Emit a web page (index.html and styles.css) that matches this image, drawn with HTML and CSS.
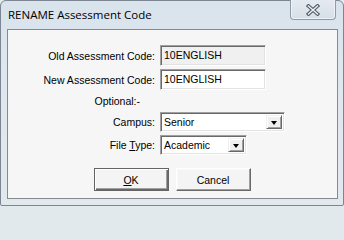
FILE: index.html
```html
<!DOCTYPE html>
<html>
<head>
<meta charset="utf-8">
<title>RENAME Assessment Code</title>
<link rel="stylesheet" href="styles.css">
</head>
<body>
<div class="window">
  <div class="titlebar">
    <span class="title">RENAME Assessment Code</span>
    <div class="close">
      <svg width="14" height="12" viewBox="0 0 14 12">
        <path d="M2.5 2 L11.5 10 M11.5 2 L2.5 10" stroke="#4f5862" stroke-width="3.6" stroke-linecap="square" fill="none"/>
        <path d="M2.5 2 L11.5 10 M11.5 2 L2.5 10" stroke="#eef1f4" stroke-width="1.5" stroke-linecap="square" fill="none"/>
      </svg>
    </div>
  </div>
  <div class="client">
    <div class="form">
      <div class="lbl">Old Assessment Code:</div>
      <div class="tb ro">10ENGLISH</div>
      <div class="lbl">New Assessment Code:</div>
      <div class="tb">10ENGLISH</div>
      <div class="lbl opt">Optional:-</div>
      <div></div>
      <div class="lbl">Campus:</div>
      <div class="combo wide"><span class="val">Senior</span><span class="arrow"><span class="tri"></span></span></div>
      <div class="lbl">File <u>T</u>ype:</div>
      <div class="combo narrow"><span class="val">Academic</span><span class="arrow"><span class="tri"></span></span></div>
    </div>
    <div class="buttons">
      <div class="btn default"><span><u>O</u>K</span></div>
      <div class="btn">Cancel</div>
    </div>
  </div>
</div>
</body>
</html>
```

FILE: styles.css
```css
html, body {
  margin: 0;
  padding: 0;
}
html {
  background: #e2e9ed;
}
body {
  width: 344px;
  height: 206px;
  background: #e2e9ed;
  overflow: hidden;
}
.window {
  box-sizing: border-box;
  width: 344px;
  height: 206px;
  border: 1px solid #7b8692;
  border-radius: 6px 6px 2px 2px;
  background: linear-gradient(to bottom, #d9e3ec 0%, #dfe7ee 40%, #e2e9ed 100%);
  display: flex;
  flex-direction: column;
}
.titlebar {
  height: 28px;
  display: flex;
  align-items: flex-start;
  flex: none;
}
.title {
  font-family: "Open Sans", "Noto Sans", sans-serif;
  font-size: 11.5px;
  color: #000;
  line-height: 17px;
  margin-top: 5px;
  padding-left: 7px;
}
.close {
  margin-left: auto;
  margin-right: 7px;
  margin-top: -1px;
  width: 46px;
  height: 20px;
  box-sizing: border-box;
  border: 1px solid #8f9aa6;
  border-top: none;
  border-radius: 0 0 4px 4px;
  background: linear-gradient(to bottom, #e4eaf0, #d6dfe8);
  box-shadow: inset 0 -1px 0 #eef2f6, inset 1px 0 0 #eef2f6, inset -1px 0 0 #eef2f6;
  display: flex;
  align-items: center;
  justify-content: center;
}
.close svg {
  display: block;
  margin-top: 1px;
}
.client {
  box-sizing: border-box;
  height: 170px;
  margin: 0 5px 6px 6px;
  border: 1px solid #858b91;
  background: #f6f6f6;
  display: flex;
  flex-direction: column;
  font-family: "Liberation Sans", Arial, sans-serif;
  font-size: 10.5px;
  color: #000;
}
.form {
  display: grid;
  grid-template-columns: 147px auto;
  grid-template-rows: 21px 21px 16px 20px 20px;
  column-gap: 5px;
  row-gap: 3px;
  padding-top: 15px;
  justify-items: start;
}
.lbl {
  justify-self: stretch;
  text-align: right;
  align-self: center;
  white-space: nowrap;
}
.lbl.opt {
  padding-right: 15px;
}
.tb {
  box-sizing: border-box;
  width: 106px;
  height: 21px;
  border: 1px solid;
  border-color: #a0a0a0 #ffffff #ffffff #a0a0a0;
  box-shadow: inset 1px 1px 0 #696969, inset -1px -1px 0 #e3e3e3;
  background: #ffffff;
  padding-left: 3px;
  line-height: 19px;
}
.tb.ro {
  background: #f0f0f0;
}
.combo {
  box-sizing: border-box;
  height: 20px;
  border: 1px solid;
  border-color: #a0a0a0 #ffffff #ffffff #a0a0a0;
  box-shadow: inset 1px 1px 0 #696969, inset -1px -1px 0 #e3e3e3;
  background: #ffffff;
  display: flex;
  align-items: stretch;
  padding: 2px;
}
.combo.wide { width: 125px; }
.combo.narrow { width: 87px; }
.val {
  flex: 1;
  line-height: 14px;
  padding-left: 1px;
}
.arrow {
  box-sizing: border-box;
  width: 16px;
  flex: none;
  background: #f0f0f0;
  border: 1px solid;
  border-color: #f0f0f0 #696969 #696969 #f0f0f0;
  box-shadow: inset 1px 1px 0 #ffffff, inset -1px -1px 0 #a0a0a0;
  display: flex;
  align-items: center;
  justify-content: center;
}
.tri {
  width: 0;
  height: 0;
  border-left: 3.5px solid transparent;
  border-right: 3.5px solid transparent;
  border-top: 4px solid #000;
  margin-top: 1px;
}
.buttons {
  display: flex;
  justify-content: center;
  gap: 7px;
  margin-top: 13px;
  padding-right: 1px;
}
.btn {
  box-sizing: border-box;
  width: 75px;
  height: 23px;
  background: #f4f4f4;
  border: 1px solid;
  border-color: #ffffff #696969 #696969 #ffffff;
  box-shadow: inset -1px -1px 0 #a0a0a0, inset 1px 1px 0 #f8f8f8;
  display: flex;
  align-items: center;
  justify-content: center;
  line-height: 14px;
}
.btn.default {
  border: 1px solid #646464;
  box-shadow: inset 1px 1px 0 #ffffff, inset -1px -1px 0 #696969, inset -2px -2px 0 #a0a0a0;
}
u {
  text-decoration: underline;
  text-underline-offset: 1px;
}
```
